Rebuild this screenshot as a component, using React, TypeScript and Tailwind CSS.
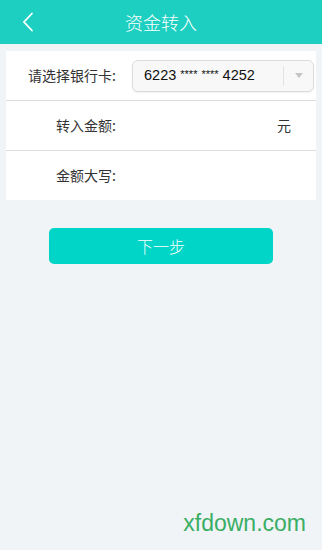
import React from 'react'

const FONT = '"Noto Sans CJK SC", "Liberation Sans", sans-serif'

export default function App() {
  return (
    <div
      className="relative w-[322px] h-[550px] bg-[#f0f4f7] overflow-hidden"
      style={{ fontFamily: FONT }}
    >
      {/* Header */}
      <div className="relative h-[44px] bg-[#1ccfc0] flex items-center justify-center">
        <svg
          className="absolute left-[21px] top-[12px]"
          width="14"
          height="20"
          viewBox="0 0 14 20"
          fill="none"
          stroke="white"
          strokeWidth="1.8"
          strokeLinecap="round"
        >
          <path d="M11 1.5 L3 10 L11 18.5" />
        </svg>
        <span className="text-white text-[18px] font-light">资金转入</span>
      </div>

      {/* Form card */}
      <div className="mt-[7px] mx-[6px] bg-white">
        <div className="h-[50px] flex items-center border-b border-[#dcdcdc]">
          <span className="w-[110px] text-right text-[14px] text-[#333]">请选择银行卡:</span>
          <div className="ml-[16px] w-[182px] h-[32px] rounded-[6px] border border-[#dcdcdc] bg-[#f8f8f8] flex items-center shadow-[0_1px_2px_rgba(0,0,0,0.06)]">
            <span
              className="flex-1 pl-[11px] text-[14.5px] text-[#111]"
              style={{ fontFamily: '"Liberation Sans", sans-serif' }}
            >
              6223 <span className="text-[11px] align-[2px]">****</span>{' '}
              <span className="text-[11px] align-[2px]">****</span> 4252
            </span>
            <div className="w-px h-[20px] bg-[#e2e2e2]" />
            <div className="w-[29px] flex items-center justify-center">
              <svg width="8" height="5" viewBox="0 0 8 5">
                <path d="M0 0 H8 L4 5 Z" fill="#c4c4c4" />
              </svg>
            </div>
          </div>
        </div>
        <div className="h-[50px] flex items-center border-b border-[#dcdcdc]">
          <span className="w-[110px] text-right text-[14px] text-[#333]">转入金额:</span>
          <span className="ml-auto mr-[25px] text-[14px] text-[#333]">元</span>
        </div>
        <div className="h-[49px] flex items-center">
          <span className="w-[110px] text-right text-[14px] text-[#333]">金额大写:</span>
        </div>
      </div>

      {/* Next button */}
      <div className="mt-[28px] flex justify-center">
        <button className="w-[224px] h-[36px] rounded-[5px] bg-[#00d5c7] text-white text-[16px] font-light">
          下一步
        </button>
      </div>

      {/* Watermark */}
      <div
        className="absolute right-[16px] bottom-[10px] text-[23px] text-[#3aae64]"
        style={{ fontFamily: '"Liberation Sans", sans-serif' }}
      >
        xfdown.com
      </div>
    </div>
  )
}
